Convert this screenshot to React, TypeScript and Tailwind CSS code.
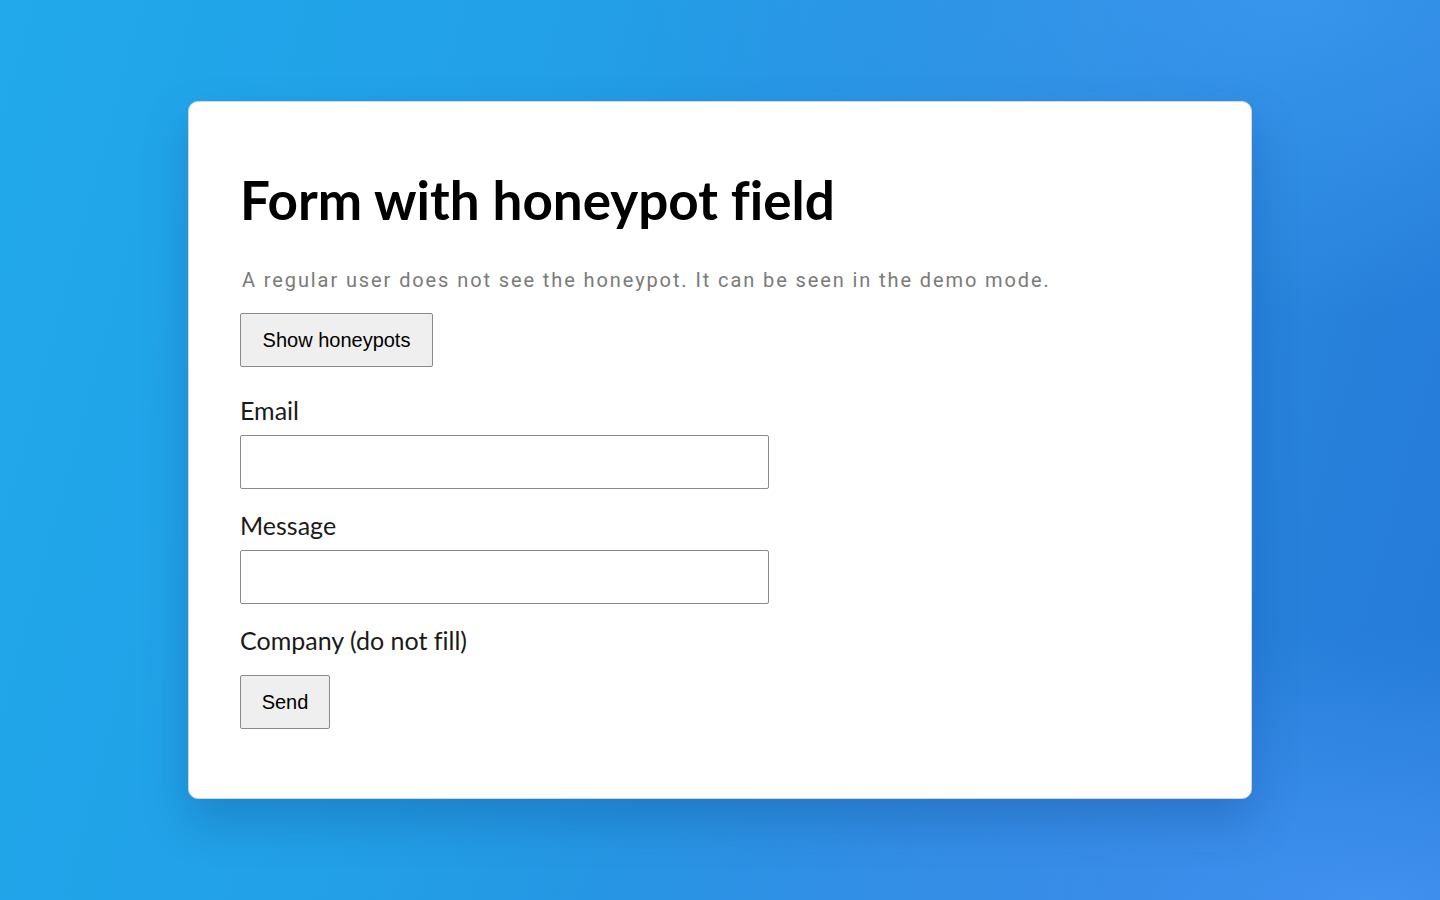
export default function App() {
  return (
    <div className="relative min-h-screen w-full overflow-hidden bg-[linear-gradient(105deg,#21a9eb_0%,#229fe7_35%,#2a8ade_70%,#2479d8_100%)]">
      {/* soft light patches, top right and bottom right */}
      <div className="pointer-events-none absolute inset-0 bg-[radial-gradient(ellipse_45%_35%_at_90%_0%,rgba(60,154,240,0.75)_0%,rgba(60,154,240,0)_100%)]" />
      <div className="pointer-events-none absolute inset-0 bg-[radial-gradient(ellipse_55%_30%_at_95%_100%,rgba(66,146,240,0.95)_0%,rgba(66,146,240,0)_100%)]" />
      <div className="relative flex justify-center pt-[101px]">
        <div className="flex h-[698px] w-[1064px] flex-col rounded-[10px] border border-[#d6d6d6] bg-white pl-[51px] pt-[71px] shadow-[0_22px_45px_rgba(10,50,120,0.25)] [font-variant-ligatures:none]">
          <h1 className="font-['Lato',sans-serif] text-[53px] font-bold leading-none text-black">
            Form with honeypot field
          </h1>

          <p className="mt-[44px] pl-[2px] font-['Roboto',sans-serif] text-[20px] leading-none tracking-[1.9px] text-[#7a7a7a]">
            A regular user does not see the honeypot. It can be seen in the demo mode.
          </p>

          <button className="mt-[23px] h-[54px] w-[193px] rounded-[2px] border border-[#8a8a8a] bg-[#efefef] font-['Liberation_Sans',Arial,sans-serif] text-[20px] text-black">
            Show honeypots
          </button>

          <form className="flex flex-col" onSubmit={(e) => e.preventDefault()}>
            <label className="mt-[31px] font-['Lato',sans-serif] text-[25px] leading-none text-[#1a1a1a]">Email</label>
            <input className="mt-[12px] h-[54px] w-[529px] rounded-[2px] border border-[#8a8a8a] bg-white" />

            <label className="mt-[24px] font-['Lato',sans-serif] text-[25px] leading-none text-[#1a1a1a]">Message</label>
            <input className="mt-[12px] h-[54px] w-[529px] rounded-[2px] border border-[#8a8a8a] bg-white" />

            <label className="mt-[24px] font-['Lato',sans-serif] text-[25px] leading-none text-[#1a1a1a]">Company (do not fill)</label>

            <button type="submit" className="mt-[22px] h-[54px] w-[90px] rounded-[2px] border border-[#8a8a8a] bg-[#efefef] font-['Liberation_Sans',Arial,sans-serif] text-[20px] text-black">
              Send
            </button>
          </form>
        </div>
      </div>
    </div>
  );
}
